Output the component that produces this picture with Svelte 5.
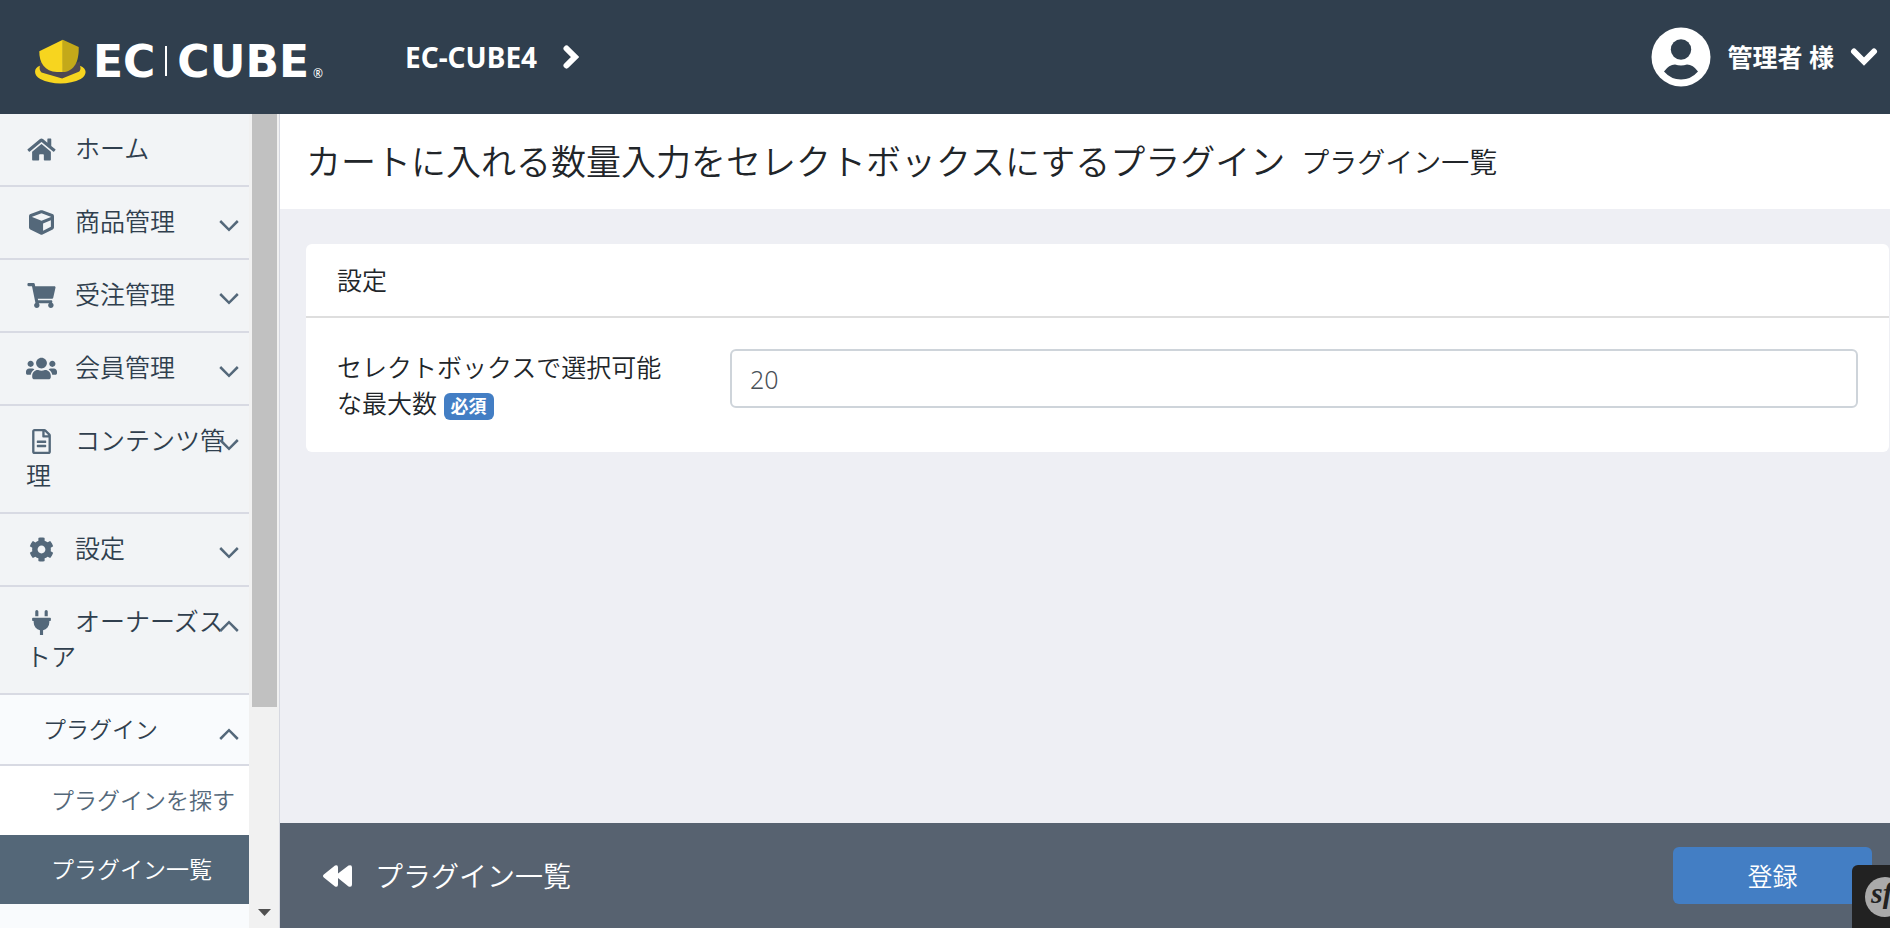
<script lang="ts">
    type MenuItem = {
        label: string;
        icon: string;
        viewBox: string;
        path: string;
        open?: boolean;
        leaf?: boolean;
    };

    const menu: MenuItem[] = [
        {
            label: 'ホーム',
            icon: 'home',
            leaf: true,
            viewBox: '0 0 576 512',
            path: 'M280.37 148.26L96 300.11V464a16 16 0 0 0 16 16l112.06-.29a16 16 0 0 0 15.92-16V368a16 16 0 0 1 16-16h64a16 16 0 0 1 16 16v95.64a16 16 0 0 0 16 16.05L464 480a16 16 0 0 0 16-16V300L295.67 148.26a12.19 12.19 0 0 0-15.3 0zM571.6 251.47L488 182.56V44.05a12 12 0 0 0-12-12h-56a12 12 0 0 0-12 12v72.61L318.47 43a48 48 0 0 0-61 0L4.34 251.47a12 12 0 0 0-1.6 16.9l25.5 31A12 12 0 0 0 45.15 301l235.22-193.74a12.19 12.19 0 0 1 15.3 0L530.9 301a12 12 0 0 0 16.9-1.6l25.5-31a12 12 0 0 0-1.7-16.93z'
        },
        {
            label: '商品管理',
            icon: 'cube',
            viewBox: '0 0 512 512',
            path: 'M239.1 6.3l-208 78c-18.7 7-31.1 25-31.1 45v225.1c0 18.2 10.3 34.8 26.5 42.9l208 104c13.5 6.8 29.4 6.8 42.9 0l208-104c16.3-8.1 26.5-24.8 26.5-42.9V129.3c0-20-12.4-37.9-31.1-44.9l-208-78C262 2.2 250 2.2 239.1 6.3zM256 68.4l192 72v1.1l-192 78-192-78v-1.1l192-72zm32 356V275.5l160-65v133.9l-160 80z'
        },
        {
            label: '受注管理',
            icon: 'cart',
            viewBox: '0 0 576 512',
            path: 'M528.12 301.319l47.273-208C578.806 78.301 567.391 64 551.99 64H159.208l-9.166-44.81C147.758 8.021 137.93 0 126.529 0H24C10.745 0 0 10.745 0 24v16c0 13.255 10.745 24 24 24h69.883l70.248 343.435C147.325 417.1 136 435.222 136 456c0 30.928 25.072 56 56 56s56-25.072 56-56c0-15.674-6.447-29.835-16.824-40h209.647C430.447 426.165 424 440.326 424 456c0 30.928 25.072 56 56 56s56-25.072 56-56c0-22.172-12.888-41.332-31.579-50.405l5.517-24.276c3.413-15.018-8.002-29.319-23.403-29.319H218.117l-6.545-32h293.145c11.206 0 20.92-7.754 23.403-18.681z'
        },
        {
            label: '会員管理',
            icon: 'users',
            viewBox: '0 0 640 512',
            path: 'M96 224c35.3 0 64-28.7 64-64s-28.7-64-64-64-64 28.7-64 64 28.7 64 64 64zm448 0c35.3 0 64-28.7 64-64s-28.7-64-64-64-64 28.7-64 64 28.7 64 64 64zm32 32h-64c-17.6 0-33.5 7.1-45.1 18.6 40.3 22.1 68.9 62 75.1 109.4h66c17.7 0 32-14.3 32-32v-32c0-35.3-28.7-64-64-64zm-256 0c61.9 0 112-50.1 112-112S381.9 32 320 32 208 82.1 208 144s50.1 112 112 112zm76.8 32h-8.3c-20.8 10-43.9 16-68.5 16s-47.6-6-68.5-16h-8.3C179.6 288 128 339.6 128 403.2V432c0 26.5 21.5 48 48 48h288c26.5 0 48-21.5 48-48v-28.8c0-63.6-51.6-115.2-115.2-115.2zm-223.7-13.4C161.5 263.1 145.6 256 128 256H64c-35.3 0-64 28.7-64 64v32c0 17.7 14.3 32 32 32h65.9c6.3-47.4 34.9-87.3 75.2-109.4z'
        },
        {
            label: 'コンテンツ管理',
            icon: 'file',
            viewBox: '0 0 384 512',
            path: 'M288 248v28c0 6.6-5.4 12-12 12H108c-6.6 0-12-5.4-12-12v-28c0-6.6 5.4-12 12-12h168c6.6 0 12 5.4 12 12zm-12 72H108c-6.6 0-12 5.4-12 12v28c0 6.6 5.4 12 12 12h168c6.6 0 12-5.4 12-12v-28c0-6.6-5.4-12-12-12zm108-188.1V464c0 26.5-21.5 48-48 48H48c-26.5 0-48-21.5-48-48V48C0 21.5 21.5 0 48 0h204.1C264.8 0 277 5.1 286 14.1L369.9 98c9 8.9 14.1 21.2 14.1 33.9zm-128-80V128h76.1L256 51.9zM336 464V176H232c-13.3 0-24-10.7-24-24V48H48v416h288z'
        },
        {
            label: '設定',
            icon: 'cog',
            viewBox: '0 0 512 512',
            path: 'M487.4 315.7l-42.6-24.6c4.3-23.2 4.3-47 0-70.2l42.6-24.6c4.9-2.8 7.1-8.6 5.5-14-11.1-35.6-30-67.8-54.7-94.6-3.8-4.1-10-5.1-14.8-2.3L380.8 110c-17.9-15.4-38.5-27.3-60.8-35.1V25.8c0-5.6-3.9-10.5-9.4-11.7-36.7-8.2-74.3-7.8-109.2 0-5.5 1.2-9.4 6.1-9.4 11.7V75c-22.2 7.9-42.8 19.8-60.8 35.1L88.7 85.5c-4.9-2.8-11-1.9-14.8 2.3-24.7 26.7-43.6 58.9-54.7 94.6-1.7 5.4.6 11.2 5.5 14L67.3 221c-4.3 23.2-4.3 47 0 70.2l-42.6 24.6c-4.9 2.8-7.1 8.6-5.5 14 11.1 35.6 30 67.8 54.7 94.6 3.8 4.1 10 5.1 14.8 2.3l42.6-24.6c17.9 15.4 38.5 27.3 60.8 35.1v49.2c0 5.6 3.9 10.5 9.4 11.7 36.7 8.2 74.3 7.8 109.2 0 5.5-1.2 9.4-6.1 9.4-11.7v-49.2c22.2-7.9 42.8-19.8 60.8-35.1l42.6 24.6c4.9 2.8 11 1.9 14.8-2.3 24.7-26.7 43.6-58.9 54.7-94.6 1.5-5.5-.7-11.3-5.6-14.1zM256 336c-44.1 0-80-35.9-80-80s35.9-80 80-80 80 35.9 80 80-35.9 80-80 80z'
        },
        {
            label: 'オーナーズストア',
            icon: 'plug',
            open: true,
            viewBox: '0 0 384 512',
            path: 'M320 32a32 32 0 0 0-64 0v96h64zm48 128H16A16 16 0 0 0 0 176v32a16 16 0 0 0 16 16h16v32a160.07 160.07 0 0 0 128 156.8V512h64V412.8A160.07 160.07 0 0 0 352 256V224h16a16 16 0 0 0 16-16V176A16 16 0 0 0 368 160zM128 32a32 32 0 0 0-64 0v96h64z'
        }
    ];

    const pluginLinks = [
        { label: 'プラグインを探す', active: false },
        { label: 'プラグイン一覧', active: true }
    ];

    let maxQuantity = '20';
</script>

{#snippet caret(open: boolean)}
    <svg class="caret" viewBox="0 0 20 12" aria-hidden="true">
        <path d={open ? 'M1.2 11L10 2.2L18.8 11' : 'M1.2 1L10 9.8L18.8 1'} />
    </svg>
{/snippet}

<div class="app">
    <header class="topbar">
        <a class="logo" href="#home" aria-label="EC-CUBE">
            <svg class="logo-hat" viewBox="30 26 154 134" aria-hidden="true">
                <path fill="#4d4753" d="M44 92L44 124L112 148L166 122L166 92L150 100L60 100z" />
                <path fill="#f7d51f" d="M45 106C24 114 26 134 46 146C80 164 134 164 168 146C188 134 188 114 166 106C168 112 168 120 162 124L112 144L50 126C44 121 43 113 45 106z" />
                <path fill="#f7d51f" d="M114 27L43 62C42 96 60 124 96 125L114 125z" />
                <path fill="#c4a919" d="M114 27L162 49C163 92 150 122 114 125z" />
            </svg>
            <span class="wordmark">EC</span>
            <span class="logo-bar"></span>
            <span class="wordmark">CUBE</span>
            <span class="registered">®</span>
        </a>
        <a class="shop" href="#shop">
            <span>EC-CUBE4</span>
            <svg class="shop-arrow" viewBox="0 0 16 24" aria-hidden="true">
                <path d="M3.5 3.5L12 12L3.5 20.5" />
            </svg>
        </a>
        <button class="user" type="button">
            <svg class="avatar" viewBox="0 0 60 60" aria-hidden="true">
                <circle cx="30" cy="30" r="29.5" fill="#fff" />
                <circle cx="30" cy="22.5" r="10.2" fill="#303f4e" />
                <path fill="#303f4e" d="M13 44.500Q18 37.500 24 37.500Q27 38.500 30 38.500Q33 38.500 36 37.500Q42 37.500 47 44.500Q40 52.500 30 52.500Q20 52.500 13 44.500z" />
            </svg>
            <span>管理者 様</span>
            <svg class="user-arrow" viewBox="0 0 28 20" aria-hidden="true">
                <path d="M4 4.5L14 14.5L24 4.5" />
            </svg>
        </button>
    </header>

    <div class="body">
        <aside class="sidebar">
            <nav class="menu">
                {#each menu as item (item.icon)}
                    <a class="menu-item" href="#{item.icon}">
                        <svg class="menu-icon" viewBox={item.viewBox} aria-hidden="true">
                            <path d={item.path} />
                        </svg>{item.label}
                        {#if !item.leaf}
                            {@render caret(item.open ?? false)}
                        {/if}
                    </a>
                {/each}
                <a class="menu-item second" href="#plugin">
                    プラグイン
                    {@render caret(true)}
                </a>
                {#each pluginLinks as link (link.label)}
                    <a class="menu-item third" class:active={link.active} href="#plugin-list">{link.label}</a>
                {/each}
                <a class="menu-item second" href="#template">
                    テンプレート
                    {@render caret(false)}
                </a>
            </nav>
            <div class="scrollbar">
                <div class="thumb"></div>
                <svg class="scroll-down" viewBox="0 0 13 7" aria-hidden="true">
                    <path d="M0 0H13L6.5 7z" />
                </svg>
            </div>
        </aside>

        <main class="main">
            <div class="page-title">
                <h1>カートに入れる数量入力をセレクトボックスにするプラグイン</h1>
                <span class="page-subtitle">プラグイン一覧</span>
            </div>

            <div class="content">
                <section class="card">
                    <h2 class="card-header">設定</h2>
                    <div class="card-body">
                        <label class="field-label" for="max-quantity">
                            セレクトボックスで選択可能な最大数
                            <span class="badge">必須</span>
                        </label>
                        <input class="field" id="max-quantity" type="text" bind:value={maxQuantity} />
                    </div>
                </section>
            </div>

            <footer class="actions">
                <a class="back" href="#plugin-list">
                    <svg class="back-icon" viewBox="0 0 30 22" aria-hidden="true">
                        <path d="M0.8 9.5L12 0.6Q15 -0.6 15 2.5V8.5L25.5 0.6Q29 -0.8 29 2.5V19.5Q29 22.6 25.5 21.4L15 13V19.5Q15 22.6 12 21.4L0.8 12.5Q-0.8 11 0.8 9.5z" />
                    </svg>
                    <span>プラグイン一覧</span>
                </a>
                <button class="submit" type="submit">登録</button>
            </footer>
        </main>
    </div>

    <button class="debug" type="button" aria-label="Symfony">
        <svg class="debug-icon" viewBox="0 0 40 40" aria-hidden="true">
            <circle cx="20" cy="20" r="20" fill="#aaa" />
            <text x="6" y="26" fill="#222">sf</text>
        </svg>
    </button>
</div>

<style>
    :global(body) {
        margin: 0;
    }

    .app {
        display: flex;
        flex-direction: column;
        position: relative;
        height: 100vh;
        overflow: hidden;
        background: #eeeff4;
        color: #212529;
        font-family: "Noto Sans", "Noto Sans CJK JP", sans-serif;
        font-size: 25px;
        font-weight: 350;
        line-height: 36px;
    }

    .app *,
    .app {
        box-sizing: border-box;
    }

    a {
        color: inherit;
        text-decoration: none;
    }

    button {
        border: 0;
        padding: 0;
        font: inherit;
        cursor: pointer;
    }

    /* top bar */
    .topbar {
        display: flex;
        align-items: center;
        flex: none;
        height: 114px;
        padding: 0 12px 0 35px;
        background: #303f4e;
        color: #fff;
        font-weight: 700;
    }

    .logo {
        display: flex;
        align-items: center;
        width: 370px;
        padding-top: 8px;
    }

    .logo-hat {
        width: 51px;
        height: 45px;
        margin-right: 7px;
    }

    .wordmark {
        font-family: "DejaVu Sans", sans-serif;
        font-size: 44px;
        line-height: 45px;
    }

    .logo-bar {
        width: 2px;
        height: 30px;
        margin: 0 10px;
        background: #fff;
    }

    .registered {
        align-self: flex-end;
        margin-left: 4px;
        font-size: 12px;
        font-weight: 400;
        line-height: 20px;
    }

    .shop {
        display: flex;
        align-items: center;
        gap: 26px;
        font-size: 28px;
    }

    .shop-arrow {
        width: 16px;
        height: 24px;
    }

    .shop-arrow path,
    .user-arrow path {
        fill: none;
        stroke: #fff;
        stroke-width: 6;
        stroke-linecap: round;
    }

    .user {
        display: flex;
        align-items: center;
        margin-left: auto;
        background: none;
        color: #fff;
    }

    .avatar {
        width: 60px;
        height: 60px;
        margin-right: 16px;
    }

    .user-arrow {
        width: 28px;
        height: 20px;
        margin-left: 16px;
    }

    /* sidebar */
    .body {
        display: flex;
        flex: 1;
        min-height: 0;
    }

    .sidebar {
        display: flex;
        flex: none;
        width: 280px;
        border-right: 1px solid #d6d8e0;
        background: #f2f4f6;
    }

    .menu {
        flex: 1;
        min-width: 0;
        overflow: hidden;
        color: #303f4e;
        line-height: 35px;
    }

    .menu-item {
        display: block;
        position: relative;
        padding: 17px 22px 19px 26px;
        border-bottom: 2px solid #d8dae3;
        word-break: break-all;
    }

    .menu-icon {
        width: 31px;
        height: 25px;
        margin-right: 18px;
        fill: #54687a;
        vertical-align: -4px;
    }

    .caret {
        position: absolute;
        top: 33px;
        right: 10px;
        width: 20px;
        height: 12px;
        fill: none;
        stroke: #54687a;
        stroke-width: 2.5;
    }

    .second,
    .third {
        padding: 17px 0 17px 43px;
        background: #f9fbfd;
        font-size: 23px;
    }

    .third {
        padding-left: 51px;
        border-bottom: 0;
        background: #fff;
        color: #54687a;
    }

    .third.active {
        background: #546778;
        color: #fff;
    }

    .scrollbar {
        display: flex;
        flex-direction: column;
        justify-content: space-between;
        align-items: center;
        width: 30px;
        padding-bottom: 12px;
        background: #f1f1f1;
    }

    .thumb {
        width: 25px;
        height: 74%;
        background: #c1c1c1;
    }

    .scroll-down {
        width: 13px;
        height: 7px;
        fill: #505050;
    }

    /* main column */
    .main {
        display: flex;
        flex: 1;
        flex-direction: column;
        min-width: 0;
    }

    .page-title {
        display: flex;
        align-items: center;
        gap: 16px;
        height: 95px;
        padding: 0 26px;
        background: #fff;
    }

    h1 {
        margin: 0;
        font-size: 35px;
        font-weight: 350;
        line-height: 42px;
    }

    .page-subtitle {
        font-size: 28px;
    }

    .content {
        flex: 1;
        padding: 35px 1px 0 26px;
    }

    .card {
        border-radius: 6px;
        background: #fff;
    }

    .card-header {
        margin: 0;
        padding: 18px 31px;
        border-bottom: 2px solid #dedede;
        font-size: 25px;
        font-weight: 350;
    }

    .card-body {
        display: flex;
        align-items: flex-start;
        padding: 31px;
    }

    .field-label {
        flex: 0 1 328px;
        margin-right: 65px;
    }

    .badge {
        display: inline-block;
        padding: 0 7px;
        border-radius: 6px;
        background: #437ec4;
        color: #fff;
        font-size: 18px;
        font-weight: 700;
        line-height: 27px;
    }

    .field {
        flex: 1;
        min-width: 0;
        height: 59px;
        padding: 0 18px;
        border: 2px solid #ced4da;
        border-radius: 6px;
        background: #fff;
        color: #495057;
        font: inherit;
    }

    .actions {
        display: flex;
        align-items: center;
        justify-content: space-between;
        height: 105px;
        padding: 0 18px 0 43px;
        background: #576270;
        color: #fff;
    }

    .back {
        display: flex;
        align-items: center;
        gap: 22px;
        font-size: 28px;
    }

    .back-icon {
        width: 30px;
        height: 22px;
        fill: #fff;
    }

    .submit {
        width: 199px;
        height: 57px;
        border-radius: 6px;
        background: #437ec4;
        color: #fff;
    }

    /* profiler toggle, sits over the action bar */
    .debug {
        position: absolute;
        right: 0;
        bottom: 0;
        width: 38px;
        height: 63px;
        padding-left: 13px;
        border-radius: 6px 0 0 0;
        background: #222;
        overflow: hidden;
    }

    .debug-icon {
        display: block;
        width: 40px;
        height: 40px;
    }

    .debug-icon text {
        font-family: "Liberation Serif", serif;
        font-size: 30px;
        font-style: italic;
        font-weight: 700;
    }
</style>
